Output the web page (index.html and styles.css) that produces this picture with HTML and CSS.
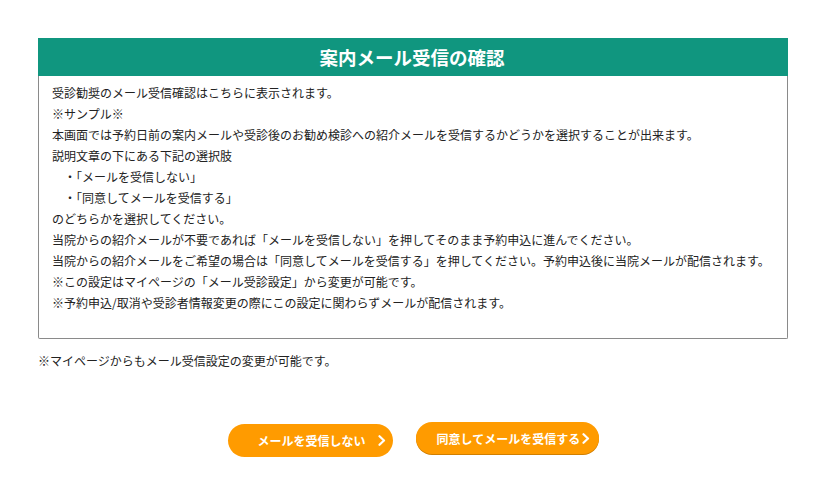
FILE: index.html
```html
<!DOCTYPE html>
<html lang="ja">
<head>
<meta charset="utf-8">
<link rel="stylesheet" href="styles.css">
</head>
<body>
<div class="page">
  <section class="panel">
    <h1 class="panel-title">案内メール受信の確認</h1>
    <div class="panel-body">
      <p>受診勧奨のメール受信確認はこちらに表示されます。</p>
      <p>※サンプル※</p>
      <p>本画面では予約日前の案内メールや受診後のお勧め検診への紹介メールを受信するかどうかを選択することが出来ます。</p>
      <p>説明文章の下にある下記の選択肢</p>
      <p class="indent">・「メールを受信しない」</p>
      <p class="indent">・「同意してメールを受信する」</p>
      <p>のどちらかを選択してください。</p>
      <p>当院からの紹介メールが不要であれば「メールを受信しない」を押してそのまま予約申込に進んでください。</p>
      <p>当院からの紹介メールをご希望の場合は「同意してメールを受信する」を押してください。予約申込後に当院メールが配信されます。</p>
      <p>※この設定はマイページの「メール受診設定」から変更が可能です。</p>
      <p>※予約申込/取消や受診者情報変更の際にこの設定に関わらずメールが配信されます。</p>
    </div>
  </section>
  <p class="note">※マイページからもメール受信設定の変更が可能です。</p>
  <div class="actions">
    <button class="btn btn-decline">メールを受信しない<svg class="chev" width="8" height="11" viewBox="0 0 8 11"><path d="M1.5 1.2 L6 5.5 L1.5 9.8" fill="none" stroke="#fff" stroke-width="2.2" stroke-linecap="round" stroke-linejoin="round"/></svg></button>
    <button class="btn btn-accept">同意してメールを受信する<svg class="chev" width="8" height="11" viewBox="0 0 8 11"><path d="M1.5 1.2 L6 5.5 L1.5 9.8" fill="none" stroke="#fff" stroke-width="2.2" stroke-linecap="round" stroke-linejoin="round"/></svg></button>
  </div>
</div>
</body>
</html>
```

FILE: styles.css
```css
html, body {
  margin: 0;
  padding: 0;
  background: #fff;
}
body {
  font-family: "Noto Sans CJK JP", "Noto Sans", sans-serif;
  color: #222;
}
.page {
  padding: 38px 32px 0 38px;
  width: 750px;
}
.panel {
  margin: 0;
}
.panel-title {
  margin: 0;
  height: 38px;
  background: #10967f;
  color: #fff;
  font-size: 18.5px;
  font-weight: 700;
  line-height: 38px;
  text-align: center;
  letter-spacing: 0;
  padding-right: 2px;
}
.panel-body {
  border: 1px solid #8a8a8a;
  border-top: none;
  border-radius: 0 0 2px 2px;
  padding: 6px 13px 24px 13px;
  height: 232px;
}
.panel-body p {
  margin: 0;
  font-size: 12px;
  line-height: 21px;
  letter-spacing: 0;
}
.panel-body p.indent {
  padding-left: 12px;
}
.note {
  margin: 14px 0 0 0;
  font-size: 12px;
  line-height: 16px;
}
.actions {
  display: flex;
  justify-content: center;
  align-items: flex-start;
  gap: 23px;
  margin-top: 53px;
}
.btn {
  display: flex;
  align-items: center;
  border: none;
  border-radius: 17px;
  background: #ff9b00;
  color: #fff;
  font-family: "Noto Sans CJK JP", "Noto Sans", sans-serif;
  font-size: 12px;
  font-weight: 700;
  height: 33px;
  cursor: pointer;
}
.btn-decline {
  width: 165px;
  padding: 0 0 0 30px;
  margin-top: 2px;
}
.btn-decline .chev {
  margin-left: 12px;
}
.btn-accept {
  width: 183px;
  padding: 0 0 0 21px;
  height: 32px;
  box-shadow: 0 1px 0 #d17f00;
}
.btn-accept .chev {
  margin-left: 2px;
}
```
